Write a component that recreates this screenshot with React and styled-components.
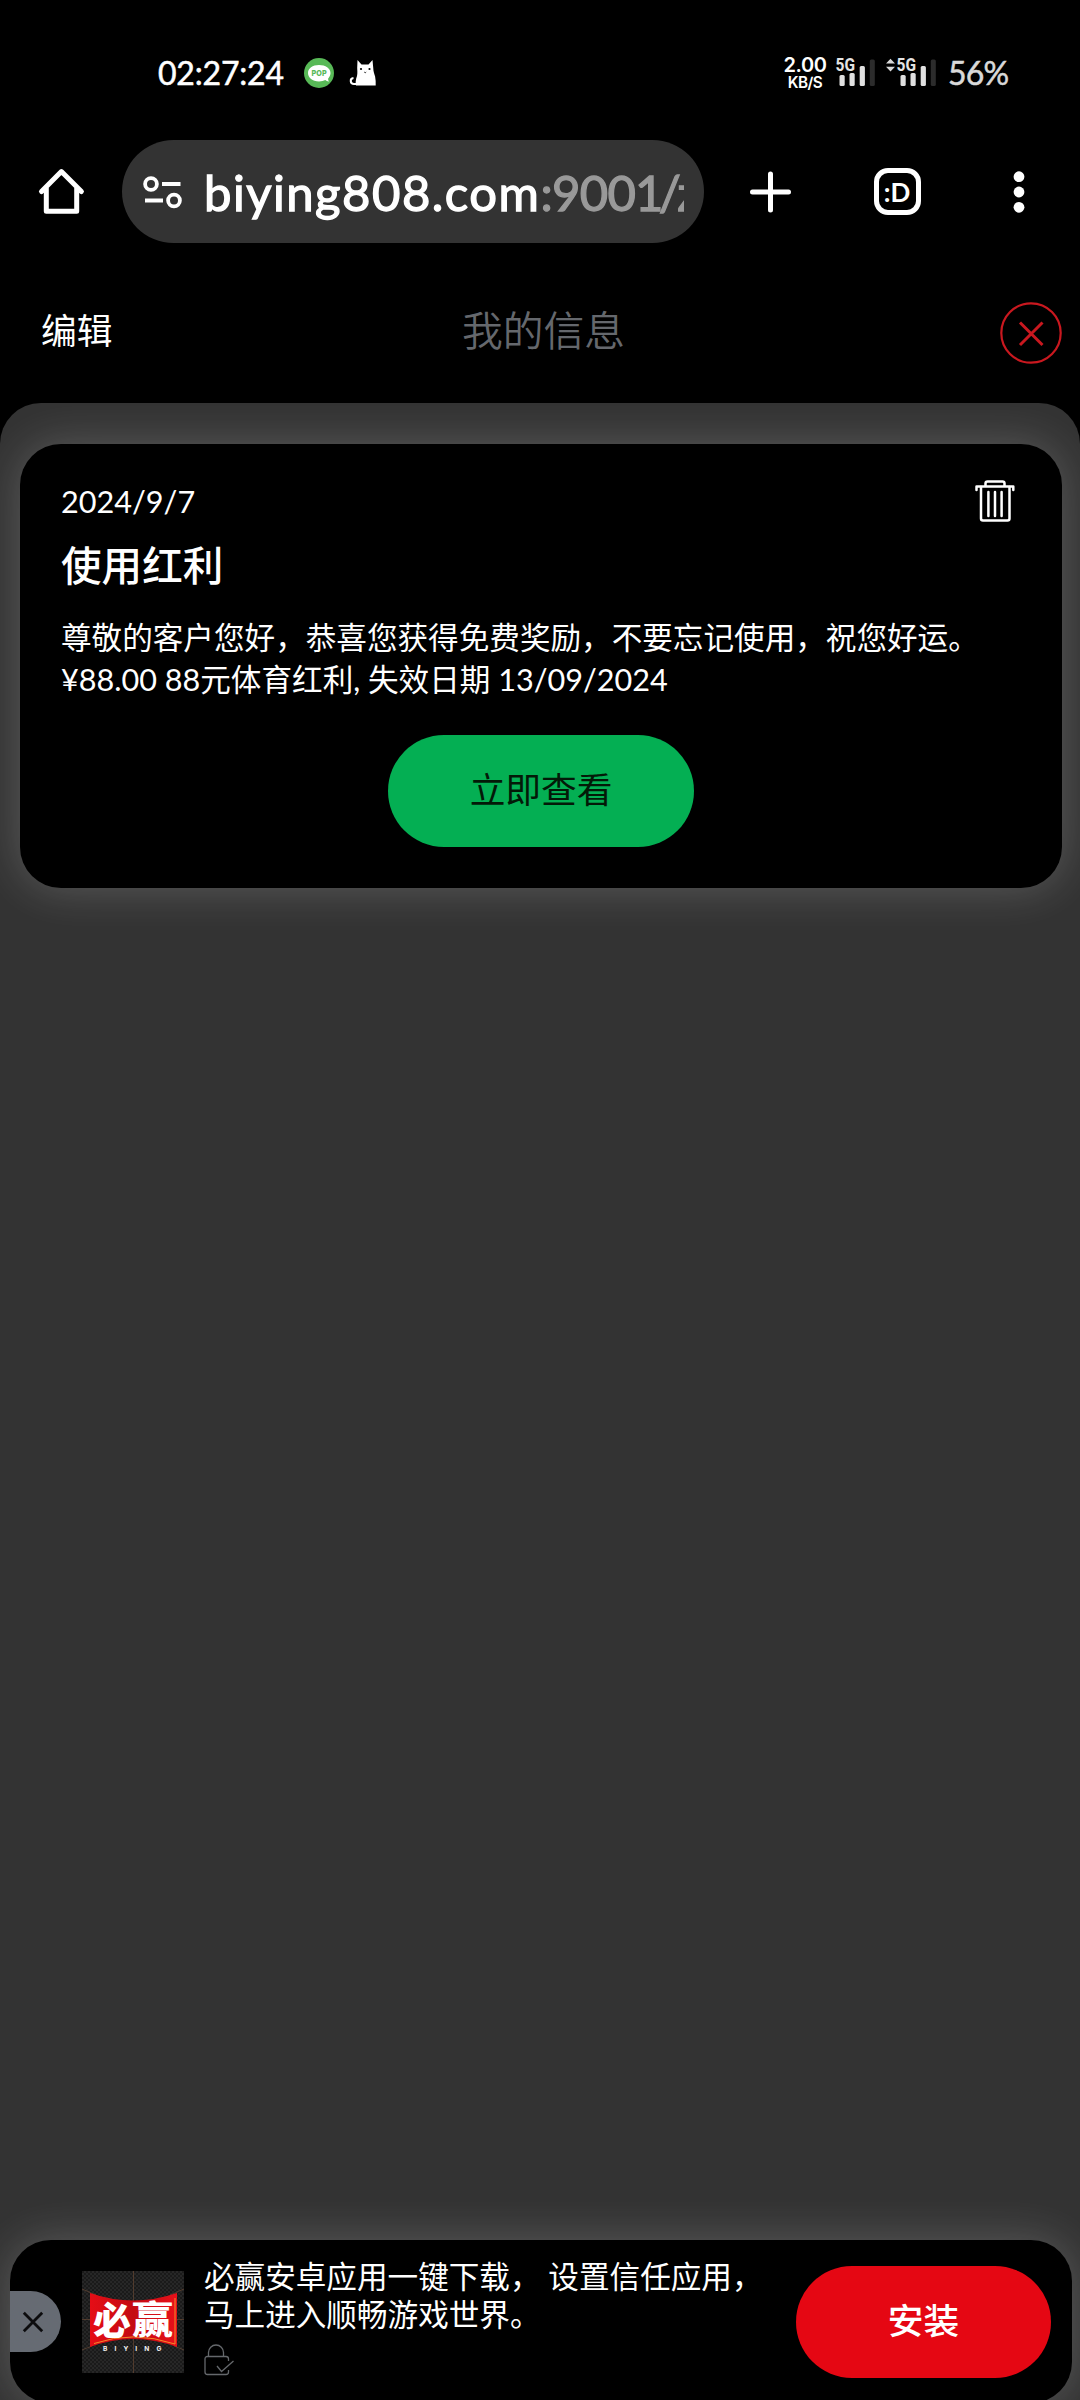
import React from "react";
import styled, { createGlobalStyle } from "styled-components";

const GlobalStyle = createGlobalStyle`
  * { box-sizing: border-box; }
  body { margin: 0; background: #000; }
  button { border: 0; margin: 0; padding: 0; background: none; font: inherit; color: inherit; }
  svg { display: block; flex: none; overflow: visible; }
`;

const Screen = styled.div`
  width: 1080px;
  height: 2400px;
  overflow: hidden;
  display: flex;
  flex-direction: column;
  background: #000;
  color: #fff;
  font-family: Lato, "Noto Sans CJK SC", sans-serif;
`;

const StatusBar = styled.div`
  height: 140px;
  padding: 6px 71px 0 158px;
  display: flex;
  align-items: center;
`;

const Clock = styled.div`
  width: 146px;
  font-size: 32px;
  line-height: 40px;
  letter-spacing: -0.2px;
  -webkit-text-stroke: 0.5px #fff;
  white-space: nowrap;
`;

const StatusIcons = styled.div`
  display: flex;
  align-items: center;
  gap: 15px;
  flex: 1;
`;

const Speed = styled.div`
  width: 44px;
  margin-right: 9px;
  padding-top: 1px;
  display: flex;
  flex-direction: column;
  align-items: center;
  font-family: Inter, sans-serif;
  font-weight: 600;
`;

const SpeedValue = styled.span`
  font-size: 20px;
  line-height: 17px;
  letter-spacing: -0.4px;
`;

const SpeedUnit = styled.span`
  font-size: 15.3px;
  line-height: 17px;
  letter-spacing: -0.5px;
`;

const Battery = styled.div`
  width: 60px;
  margin-left: 11px;
  margin-right: 1px;
  font-size: 32px;
  line-height: 40px;
  letter-spacing: -0.8px;
  color: #d9d9d9;
  -webkit-text-stroke: 0.5px #d9d9d9;
  white-space: nowrap;
`;

const SignalPair = styled.div`
  display: flex;
  gap: 9px;
`;

const BrowserBar = styled.div`
  height: 103px;
  padding: 0 50px 0 37px;
  display: flex;
  align-items: center;
`;

const AddressBar = styled.div`
  width: 582px;
  height: 103px;
  margin: 0 44px 0 36px;
  padding: 0 20px;
  border-radius: 52px;
  background: #333;
  display: flex;
  align-items: center;
`;

const Url = styled.div`
  width: 480px;
  margin-left: 20px;
  overflow: hidden;
  white-space: nowrap;
  font-size: 49px;
  line-height: 66px;
  letter-spacing: 1.5px;
  -webkit-text-stroke: 1.3px currentColor;
`;

const UrlPort = styled.span`
  color: #999;
  letter-spacing: -0.7px;
`;

const UrlPath = styled.span`
  margin-left: -4px;
  color: #999;
  letter-spacing: -3px;
`;

const BarActions = styled.div`
  flex: 1;
  display: flex;
  align-items: center;
  justify-content: space-between;
`;

const TabSwitcher = styled.div`
  width: 47px;
  height: 47px;
  margin-right: 8px;
  border: 5px solid #fff;
  border-radius: 14px;
  display: flex;
  align-items: center;
  justify-content: center;
  font-size: 26px;
  font-weight: 700;
  line-height: 30px;
`;

const PageHeader = styled.header`
  height: 160px;
  padding: 20px 18px 0 40px;
  display: grid;
  grid-template-columns: 300px 1fr 300px;
  align-items: center;
`;

const EditButton = styled.button`
  justify-self: start;
  font-size: 35.7px;
  line-height: 46px;
  padding: 0 0 5px 1px;
`;

const PageTitle = styled.h1`
  margin: 0;
  padding: 0 15px 5px 0;
  text-align: center;
  font-size: 40.8px;
  font-weight: 350;
  line-height: 52px;
  color: #65686d;
`;

const CloseButton = styled.button`
  justify-self: end;
`;

const Content = styled.main`
  flex: 1;
  min-height: 0;
  overflow: hidden;
  padding: 41px 8px 0 10px;
  border-radius: 41px 41px 0 0;
  background: #333;
  display: flex;
  flex-direction: column;
  justify-content: space-between;
`;

const MessageCard = styled.article`
  height: 444px;
  margin: 0 10px;
  padding: 36px 41px 41px;
  border-radius: 41px;
  background: #000;
  box-shadow: 0 0 46px rgba(255, 255, 255, 0.2);
  display: flex;
  flex-direction: column;
`;

const CardTop = styled.div`
  height: 43px;
  padding-right: 6px;
  display: flex;
  align-items: flex-start;
  justify-content: space-between;
`;

const DateText = styled.time`
  font-size: 30.6px;
  line-height: 43px;
`;

const CardTitle = styled.h2`
  margin: 18px 0 26px;
  font-size: 40.6px;
  font-weight: 500;
  line-height: 50px;
`;

const CardText = styled.p`
  margin: 0;
  height: 84px;
  font-size: 30.6px;
  line-height: 42px;
  white-space: pre;
`;

const PillButton = styled.button`
  width: ${(p) => p.$width}px;
  height: 112px;
  flex: none;
  border-radius: 56px;
  background: ${(p) => p.$fill};
  color: ${(p) => p.$ink};
  font-size: 35.7px;
  font-weight: ${(p) => p.$weight};
  line-height: 50px;
  padding-bottom: 2px;
`;

const CardAction = styled.div`
  margin-top: 34px;
  display: flex;
  justify-content: center;
`;

const InstallBanner = styled.aside`
  height: 163px;
  margin-bottom: -3px;
  padding-right: 21px;
  border-radius: 41px;
  background: #000;
  box-shadow: 0 0 46px rgba(255, 255, 255, 0.2);
  display: flex;
  align-items: center;
  flex: none;
`;

const DismissTab = styled.button`
  width: 51px;
  height: 61px;
  padding-left: 13px;
  border-radius: 0 31px 31px 0;
  background: #666b73;
  display: flex;
  align-items: center;
`;

const BannerBody = styled.div`
  margin-left: 20px;
  flex: 1;
  height: 131px;
  padding-top: 2px;
`;

const BannerText = styled.p`
  margin: 0 0 11px;
  font-size: 30.6px;
  font-weight: 400;
  line-height: 37.6px;
  white-space: pre;
`;

const LogoWrap = styled.div`
  margin-left: 21px;
`;

function PopIcon() {
  return (
    <svg width="30" height="30" viewBox="0 0 30 30">
      <circle cx="15" cy="15" r="15" fill="#58b957" />
      <path d="M15 7C8.500 7 4 10.400 4 15s4.500 8.500 11 8.500c2.500 0 4.600-.5 6.300-1.400.9.900 2.200 1.500 3.700 1.400-.7-.9-1-2-.8-3C25.500 19 26.500 17 26.500 15 26.500 10.400 21.500 7 15 7z" fill="#fff" />
      <text x="7.600" y="18" fontFamily="Inter, sans-serif" fontWeight="800" fontSize="8" textLength="15" lengthAdjust="spacingAndGlyphs" fill="#58b957">POP</text>
    </svg>
  );
}

function CatIcon() {
  return (
    <svg width="28" height="26" viewBox="0 0 28 26">
      <path d="M8.500 0l4 4.500h7L23.500 0l.8 8.500c0 3 1 5 1.800 8 .6 3 .7 6 .6 9H7c-.7-2.500-.3-6 1-9.500C8.700 13 8.200 10 8.200 8z" fill="#fff" />
      <path d="M10 24H5c-4 0-4.500-5.500-.5-6" fill="none" stroke="#fff" strokeWidth="2" />
      <circle cx="12" cy="9" r="1.100" /><circle cx="20.500" cy="9" r="1.100" />
      <path d="M15.200 12l1 .8 1-.8" fill="none" stroke="#000" strokeWidth=".8" />
    </svg>
  );
}

function SignalIcon({ arrows }) {
  const shift = arrows ? 12 : 0;
  return (
    <svg width={40 + shift} height="30" viewBox={`${-shift} 0 ${40 + shift} 30`}>
      {arrows && <path d="M-11 5.500L-6.500.8-2 5.500zM-11 8.800h9L-6.500 13.500z" fill="#d9d9d9" />}
      <text x="-.5" y="13" fontFamily="Roboto, sans-serif" fontWeight="700" fontSize="18" textLength="19.500" lengthAdjust="spacingAndGlyphs" fill="#e4e4e4">5G</text>
      <g fill="#e0e0e0">
        <rect x="3.500" y="17" width="5.200" height="11" rx="1.500" />
        <rect x="13.500" y="15" width="5.200" height="13" rx="1.500" />
        <rect x="23.700" y="8" width="5.200" height="20" rx="1.500" />
      </g>
      <rect x="33.800" y="1.500" width="5" height="26.500" rx="1.500" fill="#2c2c2c" />
    </svg>
  );
}

function HomeIcon() {
  return (
    <svg width="49" height="49" viewBox="0 0 49 49" fill="none" stroke="#fff" strokeWidth="5" strokeLinecap="round" strokeLinejoin="round">
      <path d="M4.500 24.500L24.400 4.600 44.400 24.500M9.300 21v23.300h30.400V21" />
    </svg>
  );
}

function SiteIcon() {
  return (
    <svg width="42" height="40" viewBox="0 0 42 40" fill="none" stroke="#fff" strokeWidth="3.800">
      <circle cx="9" cy="12" r="5.900" />
      <circle cx="32" cy="28.500" r="5.900" />
      <path d="M20 12h18.500M3 28.500h18" />
    </svg>
  );
}

function PlusIcon() {
  return (
    <svg width="46" height="44" viewBox="-.5 0 46 44" stroke="#fff" strokeWidth="5" strokeLinecap="round">
      <path d="M22 4v36M4 22h36" />
    </svg>
  );
}

function MoreIcon() {
  return (
    <svg width="22" height="44" viewBox="0 0 22 44" fill="#fff">
      <circle cx="11" cy="6.700" r="5.400" />
      <circle cx="11" cy="22" r="5.400" />
      <circle cx="11" cy="37.300" r="5.400" />
    </svg>
  );
}

function CircleCloseIcon() {
  return (
    <svg width="62" height="62" viewBox="0 0 62 62" fill="none" stroke="#c9181f">
      <circle cx="31" cy="31" r="29.700" strokeWidth="2.200" />
      <path d="M20 20.500l22.500 22.500M42.500 20.500L20 43" strokeWidth="3" />
    </svg>
  );
}

function TrashIcon() {
  return (
    <svg width="40" height="42" viewBox="0 0 40 42" fill="none" stroke="#fff" strokeWidth="2.500" strokeLinecap="round" strokeLinejoin="round">
      <path d="M1.500 10V6.400h36.800V10M10.500 6V3.500Q10.500 1.500 12.500 1.500h15Q29.500 1.500 29.500 3.500V6" />
      <path d="M6 7v31.500Q6 40.500 8 40.500h24.500Q34.500 40.500 34.500 38.500V7M13.400 12v24M20 12v24M26.600 12v24" />
    </svg>
  );
}

function DismissIcon() {
  return (
    <svg width="20" height="20" viewBox="0 0 20 20" stroke="#0c0c0e" strokeWidth="2.800">
      <path d="M.8.800l18.400 18.400M19.200.8L.8 19.200" />
    </svg>
  );
}

function LockIcon() {
  return (
    <svg width="31" height="32" viewBox="0 0 31 32" fill="none" stroke="#65686c" strokeWidth="1.300">
      <path d="M4.500 12V8.500a7.500 7.500 0 0 1 15 0V12" />
      <path d="M24.500 17v-2q0-2.500-2.500-2.500H3.500Q1 12.500 1 15v13q0 2.500 2.500 2.500H22q2.500 0 2.500-2.500v-2M13 22l4.500 5.500L29.500 17" />
    </svg>
  );
}

function BrandLogo() {
  return (
    <svg width="102" height="102" viewBox="0 0 102 102">
      <defs>
        <pattern id="mesh" width="4" height="4" patternUnits="userSpaceOnUse">
          <rect width="4" height="4" fill="#272727" />
          <circle cx="1" cy="1" r="1" fill="#151515" />
          <circle cx="3" cy="3" r="1" fill="#151515" />
        </pattern>
        <linearGradient id="flag" x1="0" y1="0" x2="1" y2="0">
          <stop offset="0" stopColor="#e50d16" />
          <stop offset=".5" stopColor="#c40b12" />
          <stop offset="1" stopColor="#e8101a" />
        </linearGradient>
      </defs>
      <rect width="102" height="102" fill="url(#mesh)" />
      <path d="M51.500 0v102M0 48.500h102M0 18l14 6M102 18l-14 6M0 79l10-4M102 79l-10-4" stroke="#80553b" strokeWidth=".7" opacity=".75" />
      <path d="M8 22Q51 37 95 22V76Q51 60 8 76z" fill="url(#flag)" />
      <path d="M12 72.500Q51 59 93 73V27" fill="none" stroke="#f58a28" strokeWidth="1" />
      <g fill="#fff" fontFamily="Noto Sans CJK SC, sans-serif" fontWeight="900" fontSize="38">
        <text x="11" y="62.500" textLength="38" lengthAdjust="spacingAndGlyphs">必</text>
        <text x="50" y="62" textLength="41" lengthAdjust="spacingAndGlyphs">赢</text>
      </g>
      <text x="21" y="80.300" fill="#f2f2f2" fontFamily="Inter, sans-serif" fontWeight="700" fontSize="6.600" letterSpacing="7.100">BIYING</text>
    </svg>
  );
}

export default function App() {
  return (
    <Screen>
      <GlobalStyle />
      <StatusBar>
        <Clock>02:27:24</Clock>
        <StatusIcons>
          <PopIcon />
          <CatIcon />
        </StatusIcons>
        <Speed>
          <SpeedValue>2.00</SpeedValue>
          <SpeedUnit>KB/S</SpeedUnit>
        </Speed>
        <SignalPair>
          <SignalIcon />
          <SignalIcon arrows />
        </SignalPair>
        <Battery>56%</Battery>
      </StatusBar>

      <BrowserBar>
        <HomeIcon />
        <AddressBar>
          <SiteIcon />
          <Url>biying808.com<UrlPort>:9001</UrlPort><UrlPath>/z</UrlPath></Url>
        </AddressBar>
        <BarActions>
          <PlusIcon />
          <TabSwitcher>:D</TabSwitcher>
          <MoreIcon />
        </BarActions>
      </BrowserBar>

      <PageHeader>
        <EditButton>编辑</EditButton>
        <PageTitle>我的信息</PageTitle>
        <CloseButton aria-label="关闭"><CircleCloseIcon /></CloseButton>
      </PageHeader>

      <Content>
        <MessageCard>
          <CardTop>
            <DateText>2024/9/7</DateText>
            <TrashIcon />
          </CardTop>
          <CardTitle>使用红利</CardTitle>
          <CardText>{"尊敬的客户您好，恭喜您获得免费奖励，不要忘记使用，祝您好运。\n¥88.00 88元体育红利, 失效日期 13/09/2024"}</CardText>
          <CardAction>
            <PillButton $width={306} $fill="#04af53" $ink="#031a08" $weight={400}>立即查看</PillButton>
          </CardAction>
        </MessageCard>

        <InstallBanner>
          <DismissTab aria-label="关闭"><DismissIcon /></DismissTab>
          <LogoWrap><BrandLogo /></LogoWrap>
          <BannerBody>
            <BannerText>{"必赢安卓应用一键下载， 设置信任应用，\n马上进入顺畅游戏世界。"}</BannerText>
            <LockIcon />
          </BannerBody>
          <PillButton $width={255} $fill="#e50713" $ink="#fff" $weight={500}>安装</PillButton>
        </InstallBanner>
      </Content>
    </Screen>
  );
}
